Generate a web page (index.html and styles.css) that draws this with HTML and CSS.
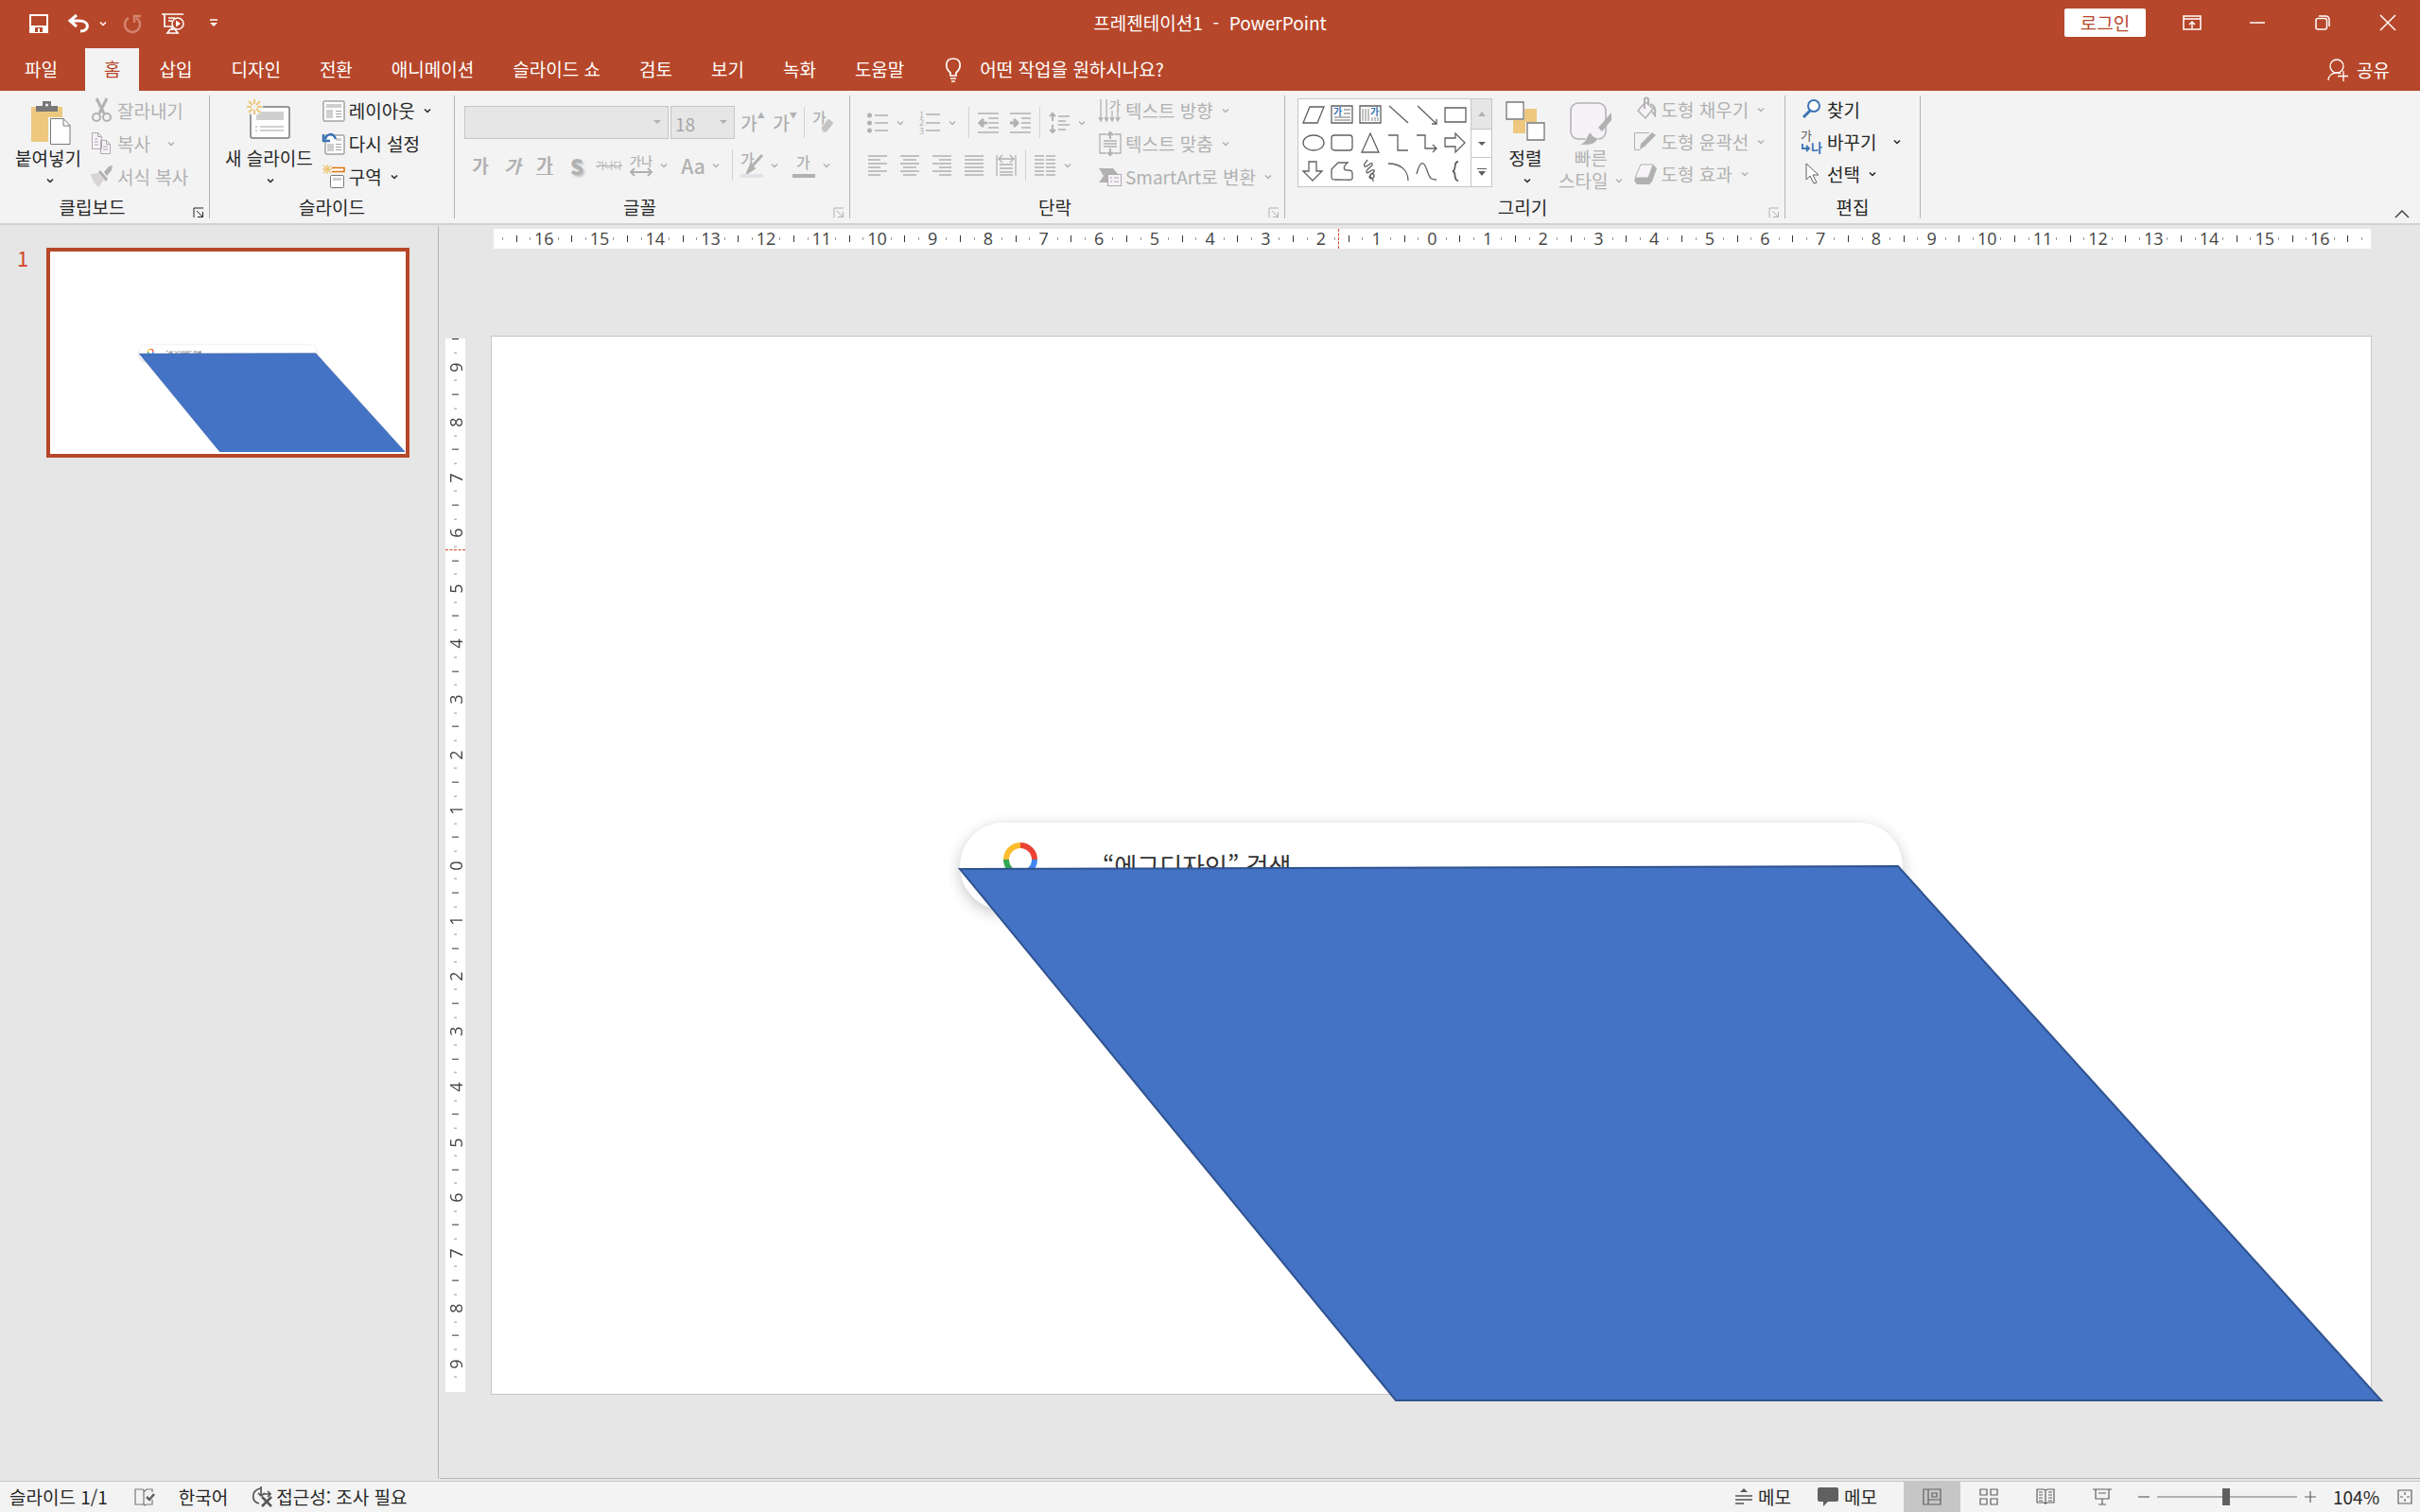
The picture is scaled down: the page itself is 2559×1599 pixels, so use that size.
FILE: index.html
```
<!DOCTYPE html>
<html lang="ko">
  <head>
    <meta charset="UTF-8" />
    <meta name="viewport" content="width=device-width, initial-scale=1.0" />
    <title>프레젠테이션1 - PowerPoint</title>
    <link rel="stylesheet" href="styles.css">
  </head>
  <body>
    <!-- shared symbols -->
    <svg class="defs" aria-hidden="true">
      <symbol id="chevron" viewBox="0 0 8 6"><path d="M1 1.5l3 3 3-3" fill="none" stroke="currentColor" stroke-width="1.5" /></symbol>
      <symbol id="launcher" viewBox="0 0 12 12"><path d="M1 11V1h10M4 4l6 6M10.500 5v5.500H5" fill="none" stroke="currentColor" /></symbol>
      <symbol id="slide-art" viewBox="0 0 1987 1118" overflow="visible">
        <filter id="soft" x="-10%" y="-60%" width="120%" height="220%"><feGaussianBlur stdDeviation="8" /></filter>
        <rect x="495" y="518" width="997" height="92" rx="46" fill="#000" opacity="0.22" filter="url(#soft)" />
        <rect x="495" y="514" width="997" height="92" rx="46" fill="#fff" />
        <g fill="none" stroke-width="6">
          <path d="M544 553a15 15 0 0 1 15-15" stroke="#fbbc2d" />
          <path d="M559 538a15 15 0 0 1 15 15" stroke="#ea4335" />
          <path d="M574 553a15 15 0 0 1-15 15" stroke="#4285f4" />
          <path d="M559 568a15 15 0 0 1-15-15" stroke="#34a853" />
        </g>
        <text x="646" y="570" class="card-text">“에그디자인” 검색</text>
        <path d="M495 563L1487 560 1998 1125H956z" fill="#4472c4" stroke="#2f528f" stroke-width="2" />
      </symbol>
    </svg>

    <header class="top">
      <div class="titlebar">
        <div class="quick">
          <button class="q" aria-label="저장"><svg width="20" height="20" viewBox="0 0 20 20"><path d="M1 1h18v18H1z" fill="none" stroke="#fff" stroke-width="2" /><path d="M1 12h18v7H1z" fill="#fff" /><path d="M6 14h8v5H6z" fill="#b7472a" /><path d="M9 15h2v4H9z" fill="#fff" /></svg></button>
          <button class="q" aria-label="실행 취소"><svg width="22" height="20" viewBox="0 0 22 20"><path d="M9 1L2 7l7 6M3 7h9c11 0 11 11 1 11" fill="none" stroke="#fff" stroke-width="3" /></svg></button>
          <button class="q-chev" aria-label="실행 취소 목록"><svg class="chev"><use href="#chevron" /></svg></button>
          <button class="q q-off" aria-label="다시 실행" disabled><svg width="20" height="20" viewBox="0 0 20 20"><path d="M6 4a8 8 0 1 0 8 0M12 9V2h7" fill="none" stroke="#d2836e" stroke-width="2.500" /></svg></button>
          <button class="q" aria-label="처음부터 시작"><svg width="24" height="22" viewBox="0 0 24 22"><path d="M0 1h23M3 1v13h8M7 5h7M7 8h4M9 17l-3 4h11l-3-4zM11 14v4" fill="none" stroke="#fff" stroke-width="1.700" /><circle cx="17" cy="11" r="6" fill="#b7472a" stroke="#fff" stroke-width="1.500" /><path d="M15 7.500v7l5-3.500z" fill="#fff" /></svg></button>
          <button class="q" aria-label="도구 모음 사용자 지정"><svg width="8" height="9" viewBox="0 0 8 9"><path d="M0 1h8" stroke="#fff" stroke-width="1.500" /><path d="M0 4h8L4 8z" fill="#fff" /></svg></button>
        </div>
        <div class="doc-title">프레젠테이션1 &nbsp;-&nbsp; PowerPoint</div>
        <div class="window-tools">
          <button class="login">로그인</button>
          <button class="win" aria-label="리본 메뉴 표시 옵션"><svg width="20" height="16" viewBox="0 0 20 16"><path d="M1 1h18v14H1zM1 4h18M10 14V7M7 10l3-3 3 3" fill="none" stroke="#fff" stroke-width="1.500" /></svg></button>
          <button class="win" aria-label="최소화"><svg width="16" height="16" viewBox="0 0 16 16"><path d="M0 8h16" stroke="#fff" stroke-width="1.500" /></svg></button>
          <button class="win" aria-label="이전 크기로"><svg width="16" height="16" viewBox="0 0 16 16"><rect x="1" y="3.500" width="11.500" height="11.500" rx="2" fill="none" stroke="#fff" stroke-width="1.500" /><path d="M4 1h7c3 0 4 1 4 4v7" fill="none" stroke="#fff" stroke-width="1.500" /></svg></button>
          <button class="win" aria-label="닫기"><svg width="16" height="16" viewBox="0 0 16 16"><path d="M0 0l16 16M16 0L0 16" stroke="#fff" stroke-width="1.500" /></svg></button>
        </div>
      </div>
      <nav class="tabs">
        <button class="tab file">파일</button>
        <button class="tab active">홈</button>
        <button class="tab">삽입</button>
        <button class="tab">디자인</button>
        <button class="tab">전환</button>
        <button class="tab">애니메이션</button>
        <button class="tab">슬라이드 쇼</button>
        <button class="tab">검토</button>
        <button class="tab">보기</button>
        <button class="tab">녹화</button>
        <button class="tab">도움말</button>
        <label class="tell-me" for="tell-me" aria-label="어떤 작업을 원하시나요?"><svg width="18" height="26" viewBox="0 0 18 26"><path d="M6 19v-3C0 11 0 1 9 1s9 10 3 15v3zM6 22h6M7 25h4" fill="none" stroke="#fff" stroke-width="1.700" /></svg></label>
        <input class="tell-input" id="tell-me" type="text" placeholder="어떤 작업을 원하시나요?" />
        <button class="share"><svg width="22" height="24" viewBox="0 0 22 24"><circle cx="10" cy="8" r="7" fill="none" stroke="#fff" stroke-width="1.300" /><path d="M1 23c0-5 4-8 9-8 2 0 3 0 4 1M17 13v11M11 18.500h11" fill="none" stroke="#fff" stroke-width="1.300" /></svg>공유</button>
      </nav>
    </header>

    <section class="ribbon">
      <div class="group clipboard">
        <div class="group-body">
          <button class="big">
            <svg class="paste" width="42" height="46" viewBox="0 0 42 46"><path d="M0 6h33v37H0z" fill="#edc87e" /><path d="M5 11V5h7V0h9v5h7v6z" fill="#787878" /><circle cx="16.500" cy="4" r="1.500" fill="#f3f3f3" /><path d="M19 18h15l8 8v20H19z" fill="#fff" stroke="#f3f3f3" stroke-width="2" /><path d="M20.500 18.500H34l7 7v20H20.500zM34 18.500V26h7" fill="#fff" stroke="#787878" /></svg>
            <span>붙여넣기</span>
            <svg class="chev"><use href="#chevron" /></svg>
          </button>
          <div class="stack">
            <button class="small" disabled><svg width="24" height="26" viewBox="0 0 24 26"><path d="M6 0l8 16M17 0L9 16" stroke="#b1b1b1" stroke-width="3" /><circle cx="6" cy="20" r="4" fill="none" stroke="#b1b1b1" stroke-width="2" /><circle cx="17" cy="20" r="4" fill="none" stroke="#b1b1b1" stroke-width="2" /></svg>잘라내기</button>
            <button class="small far" disabled><svg width="24" height="26" viewBox="0 0 24 26"><path d="M1.500 1.500h6l4 4v13h-10zM7.500 1.500v4h4M10.500 9.500h6l4 4v10h-10zM16.500 9.500v4h4" fill="#f6f2f8" stroke="#b1a8b1" /><path d="M4 8h3M4 11h4M4 14h4M13 16h5M13 19h5" stroke="#b1a8b1" /></svg>복사<svg class="chev"><use href="#chevron" /></svg></button>
            <button class="small" disabled><svg width="24" height="26" viewBox="0 0 24 26"><path d="M0 10l8-1 6 7-6 8C4 20 1 16 0 10z" fill="#d8d4d8" /><path d="M8 8l2-2 8 9-2 3zM14 8l5-6 4-1-1 5-5 6z" fill="#b1b1b1" /></svg>서식 복사</button>
          </div>
        </div>
        <div class="group-label">클립보드<button class="launch" aria-label="클립보드 옵션"><svg width="12" height="12"><use href="#launcher" /></svg></button></div>
      </div>

      <div class="group slides">
        <div class="group-body">
          <button class="big">
            <svg class="new-slide" width="48" height="46" viewBox="0 0 48 46"><rect x="5" y="8" width="41" height="33" rx="2" fill="#fff" stroke="#787878" stroke-width="1.500" /><path d="M11 13h29v9H11z" fill="#cfcfcf" /><path d="M15 29h25M15 33h25M10 29h2M10 33h2" stroke="#a0a0a0" /><circle cx="9" cy="8" r="9" fill="#f3f3f3" /><path d="M9 0v5M9 11v5M1 8h5M12 8h5M3 2l4 4M11 10l4 4M15 2l-4 4M3 14l4-4" stroke="#edc87e" stroke-width="2" /></svg>
            <span>새 슬라이드</span>
            <svg class="chev"><use href="#chevron" /></svg>
          </button>
          <div class="stack">
            <button class="small"><svg width="24" height="26" viewBox="0 0 24 26"><rect x="1" y="3" width="22" height="21" rx="1" fill="#fff" stroke="#787878" /><path d="M4 6h16v4H4zM4 12h7v9H4z" fill="#cfcfcf" /><path d="M14 13.500h6M14 16.500h6M14 19.500h6" stroke="#a0a0a0" /></svg>레이아웃<svg class="chev"><use href="#chevron" /></svg></button>
            <button class="small"><svg width="24" height="26" viewBox="0 0 24 26"><rect x="3" y="4" width="20" height="20" rx="1" fill="#fff" stroke="#787878" /><path d="M5 13h7v8H5zM14 7h6v3h-6z" fill="#cfcfcf" /><path d="M14 13.500h6M14 16.500h6M14 19.500h6" stroke="#a0a0a0" /><path d="M14 8C11 1 5 2 3 8M1 3v7h7" fill="none" stroke="#3a74b5" stroke-width="2.500" /></svg>다시 설정</button>
            <button class="small"><svg width="24" height="26" viewBox="0 0 24 26"><path d="M5 0v10M0 5h10M1 1l8 8M9 1L1 9" stroke="#edc87e" stroke-width="1.500" /><path d="M10 3.500h13v4H10" fill="#fff" stroke="#d9730d" stroke-width="1.500" /><rect x="8.500" y="11.500" width="14" height="13" rx="1" fill="#fff" stroke="#787878" /><path d="M11 14h9v3h-9z" fill="#cfcfcf" /></svg>구역<svg class="chev"><use href="#chevron" /></svg></button>
          </div>
        </div>
        <div class="group-label">슬라이드</div>
      </div>

      <div class="group font">
        <div class="group-body">
          <div class="tool-rows">
            <div class="tool-row">
              <div class="combo family"><select aria-label="글꼴" disabled><option></option></select></div>
              <div class="combo size"><select aria-label="글꼴 크기" disabled><option>18</option></select></div>
              <button class="tool grow" aria-label="글꼴 크기 크게" disabled>가<sup>▲</sup></button>
              <button class="tool grow" aria-label="글꼴 크기 작게" disabled>가<sup>▼</sup></button>
              <span class="sep"></span>
              <button class="tool" aria-label="모든 서식 지우기" disabled><svg width="24" height="26" viewBox="0 0 24 26"><text x="0" y="14" class="glyph">가</text><path d="M9 18l8-10 6 5-8 10H11z" fill="#c4c4c4" stroke="#f3f3f3" /></svg></button>
            </div>
            <div class="tool-row">
              <button class="tool bold" aria-label="굵게" disabled>가</button>
              <button class="tool bold italic" aria-label="기울임꼴" disabled>가</button>
              <button class="tool bold under" aria-label="밑줄" disabled><span>가</span></button>
              <button class="tool shadow" aria-label="텍스트 그림자" disabled>S</button>
              <button class="tool strike" aria-label="취소선" disabled>가나다</button>
              <button class="tool" aria-label="문자 간격" disabled><svg width="24" height="26" viewBox="0 0 24 26"><text x="0" y="13" class="glyph narrow">가나</text><path d="M1 20h22M5 16l-4 4 4 4M19 16l4 4-4 4" fill="none" stroke="#b1b1b1" stroke-width="2" /></svg></button><button class="drop" aria-label="문자 간격 목록" disabled><svg class="chev"><use href="#chevron" /></svg></button>
              <button class="tool aa" aria-label="대/소문자 바꾸기" disabled>Aa</button><button class="drop" aria-label="대/소문자 목록" disabled><svg class="chev"><use href="#chevron" /></svg></button>
              <span class="sep"></span>
              <button class="tool" aria-label="텍스트 강조 색" disabled><svg width="24" height="26" viewBox="0 0 24 26"><text x="0" y="13" class="glyph">가</text><path d="M23 2L13 13M11 13l3 3-6 4z" fill="#b1b1b1" stroke="#b1b1b1" stroke-width="3" /><path d="M0 22h24v4H0z" fill="#e6e0e8" /></svg></button><button class="drop" aria-label="강조 색 목록" disabled><svg class="chev"><use href="#chevron" /></svg></button>
              <button class="tool" aria-label="글꼴 색" disabled><svg width="24" height="26" viewBox="0 0 24 26"><text x="4" y="16" class="glyph">가</text><path d="M0 22h24v4H0z" fill="#b1b1b1" /></svg></button><button class="drop" aria-label="글꼴 색 목록" disabled><svg class="chev"><use href="#chevron" /></svg></button>
            </div>
          </div>
        </div>
        <div class="group-label">글꼴<button class="launch" aria-label="글꼴 옵션" disabled><svg width="12" height="12"><use href="#launcher" /></svg></button></div>
      </div>

      <div class="group paragraph">
        <div class="group-body">
          <div class="tool-rows">
            <div class="tool-row">
              <button class="tool" aria-label="글머리 기호" disabled><svg class="lines" width="22" height="22" viewBox="0 0 22 22"><path d="M8 3h14M8 11h14M8 19h14" /><g fill="#b1b1b1" stroke="none"><circle cx="2.500" cy="3" r="2.500" /><circle cx="2.500" cy="11" r="2.500" /><circle cx="2.500" cy="19" r="2.500" /></g></svg></button><button class="drop" aria-label="글머리 기호 목록" disabled><svg class="chev"><use href="#chevron" /></svg></button>
              <button class="tool" aria-label="번호 매기기" disabled><svg class="lines" width="22" height="24" viewBox="0 0 22 24"><path d="M7 3h15M7 12h15M7 20h15" /><g class="nums"><text y="7">1</text><text y="15">2</text><text y="24">3</text></g></svg></button><button class="drop" aria-label="번호 목록" disabled><svg class="chev"><use href="#chevron" /></svg></button>
              <span class="sep"></span>
              <button class="tool" aria-label="목록 수준 줄임" disabled><svg class="lines" width="22" height="22" viewBox="0 0 22 22"><path d="M0 1h22M11 6h11M11 11h11M11 16h11M0 21h22" /><path d="M10 11H2M6 7l-4 4 4 4" stroke-width="3" /></svg></button>
              <button class="tool" aria-label="목록 수준 늘림" disabled><svg class="lines" width="22" height="22" viewBox="0 0 22 22"><path d="M0 1h22M12 6h10M12 11h10M12 16h10M0 21h22" /><path d="M0 11h8M4 7l4 4-4 4" stroke-width="3" /></svg></button>
              <span class="sep"></span>
              <button class="tool" aria-label="줄 간격" disabled><svg class="lines" width="22" height="22" viewBox="0 0 22 22"><path d="M10 4h12M10 9h8M10 13h12M10 18h8" /><path d="M4 1v8M1 4l3-3 3 3M4 13v8M1 18l3 3 3-3" stroke-width="2" /></svg></button><button class="drop" aria-label="줄 간격 목록" disabled><svg class="chev"><use href="#chevron" /></svg></button>
            </div>
            <div class="tool-row">
              <button class="tool" aria-label="왼쪽 맞춤" disabled><svg class="lines" width="20" height="22" viewBox="0 0 20 22"><path d="M0 1h20M0 5h13M0 9h20M0 13h13M0 17h20M0 21h13" /></svg></button>
              <button class="tool" aria-label="가운데 맞춤" disabled><svg class="lines" width="20" height="22" viewBox="0 0 20 22"><path d="M0 1h20M3 5h14M0 9h20M3 13h14M0 17h20M3 21h14" /></svg></button>
              <button class="tool" aria-label="오른쪽 맞춤" disabled><svg class="lines" width="20" height="22" viewBox="0 0 20 22"><path d="M0 1h20M7 5h13M0 9h20M7 13h13M0 17h20M7 21h13" /></svg></button>
              <button class="tool" aria-label="양쪽 맞춤" disabled><svg class="lines" width="20" height="22" viewBox="0 0 20 22"><path d="M0 1h20M0 5h20M0 9h20M0 13h20M0 17h20M0 21h20" /></svg></button>
              <button class="tool" aria-label="균등 분할" disabled><svg class="lines" width="22" height="24" viewBox="0 0 22 24"><path d="M1 1v22M21 1v22M4 11h14M4 15h14M4 19h14M4 22h14M3 5h16M7 1L3 5l4 4M15 1l4 4-4 4" /></svg></button>
              <span class="sep"></span>
              <button class="tool" aria-label="단" disabled><svg class="lines" width="22" height="22" viewBox="0 0 22 22"><path d="M0 1h10M0 5h10M0 9h10M0 13h10M0 17h10M0 21h10M12 1h10M12 5h10M12 9h10M12 13h10M12 17h10M12 21h10" /></svg></button><button class="drop" aria-label="단 목록" disabled><svg class="chev"><use href="#chevron" /></svg></button>
            </div>
          </div>
          <div class="stack">
            <button class="small" disabled><svg class="lines" width="24" height="26" viewBox="0 0 24 26"><path d="M2 1v23M8 1v23M14 13v11M20 13v11M0 20l2 4 2-4M6 20l2 4 2-4M12 20l2 4 2-4M18 20l2 4 2-4" /><text x="11" y="12" class="glyph tiny">가</text></svg>텍스트 방향<svg class="chev"><use href="#chevron" /></svg></button>
            <button class="small" disabled><svg class="lines" width="24" height="26" viewBox="0 0 24 26"><path d="M8 3H1v20h7M16 3h7v20h-7M5 10h14M5 13h14M5 16h14" /><path d="M12 1v7M9 4l3-3 3 3M12 18v7M9 22l3 3 3-3" stroke-width="2" /></svg>텍스트 맞춤<svg class="chev"><use href="#chevron" /></svg></button>
            <button class="small" disabled><svg width="24" height="26" viewBox="0 0 24 26"><path d="M0 4h15l5 6H10v9H0l5-7z" fill="#b1b1b1" /><rect x="9.500" y="10.500" width="14" height="12" fill="#f6f2f8" stroke="#b1a8b1" /><path d="M12 14h2M16 14h5M12 18h2M16 18h5" stroke="#b1a8b1" /></svg>SmartArt로 변환<svg class="chev"><use href="#chevron" /></svg></button>
          </div>
        </div>
        <div class="group-label">단락<button class="launch" aria-label="단락 옵션" disabled><svg width="12" height="12"><use href="#launcher" /></svg></button></div>
      </div>

      <div class="group drawing">
        <div class="group-body">
          <div class="gallery">
            <div class="shapes">
              <button aria-label="평행 사변형"><svg viewBox="0 0 30 30"><path d="M4 24L11 7h15l-7 17z" /></svg></button>
              <button aria-label="텍스트 상자"><svg viewBox="0 0 30 30"><path d="M4 6h22v18H4z" /><path d="M17 10h7M17 14h7M7 18h17M7 21h17" stroke="#a0a0a0" /><text x="6" y="16">가</text></svg></button>
              <button aria-label="세로 텍스트 상자"><svg viewBox="0 0 30 30"><path d="M4 6h22v18H4z" /><path d="M7 9v13M10 9v13M13 9v13M17 18v4M20 18v4M23 18v4" stroke="#a0a0a0" /><text x="15" y="16">가</text></svg></button>
              <button aria-label="선"><svg viewBox="0 0 30 30"><path d="M5 6l20 18" /></svg></button>
              <button aria-label="화살표 선"><svg viewBox="0 0 30 30"><path d="M5 6l20 19M20 25h5v-5" /></svg></button>
              <button aria-label="직사각형"><svg viewBox="0 0 30 30"><path d="M4 8h22v15H4z" /></svg></button>
              <button aria-label="타원"><svg viewBox="0 0 30 30"><ellipse cx="15" cy="15" rx="11" ry="8" /></svg></button>
              <button aria-label="둥근 사각형"><svg viewBox="0 0 30 30"><rect x="4" y="7" width="22" height="16" rx="3" /></svg></button>
              <button aria-label="삼각형"><svg viewBox="0 0 30 30"><path d="M15 5l9 20H6z" /></svg></button>
              <button aria-label="꺾인 연결선"><svg viewBox="0 0 30 30"><path d="M4 7h10v16h11" /></svg></button>
              <button aria-label="꺾인 화살표"><svg viewBox="0 0 30 30"><path d="M4 7h9v14h12M21 17l4 4-4 4" /></svg></button>
              <button aria-label="오른쪽 화살표"><svg viewBox="0 0 30 30"><path d="M4 10h11V5l10 10-10 10v-6H4z" /></svg></button>
              <button aria-label="아래쪽 화살표"><svg viewBox="0 0 30 30"><path d="M10 5h8v10h6L14 25 4 15h6z" /></svg></button>
              <button aria-label="자유형"><svg viewBox="0 0 30 30"><path d="M4 13l7-7h10c-6 5-4 9 1 8 5 0 4 3 4 9-1 2-3 1-18 1-4 0-4-1-4-4z" /></svg></button>
              <button aria-label="자유 곡선"><svg viewBox="0 0 30 30"><path d="M12 3c-2 4-5 5-3 7s6-5 8-3-7 6-6 9 6-4 8-2-5 4-5 7 5 2 5-1-4-3-4 0 4 2 3 6" /></svg></button>
              <button aria-label="원호"><svg viewBox="0 0 30 30"><path d="M4 7c13 0 21 7 21 18" /></svg></button>
              <button aria-label="곡선"><svg viewBox="0 0 30 30"><path d="M4 18c4-16 8-13 11-4s4 10 10 10" /></svg></button>
              <button aria-label="중괄호"><svg viewBox="0 0 30 30"><path d="M18 5c-6 0-1 9-6 10 5 1 0 10 6 10" stroke-width="1.800" /></svg></button>
            </div>
            <div class="gallery-scroll">
              <button aria-label="위로" disabled><svg width="8" height="5" viewBox="0 0 8 5"><path d="M0 5h8L4 0z" fill="currentColor" /></svg></button>
              <button aria-label="아래로"><svg width="8" height="5" viewBox="0 0 8 5"><path d="M0 1h8L4 5z" fill="currentColor" /></svg></button>
              <button aria-label="자세히"><svg width="10" height="8" viewBox="0 0 10 8"><path d="M0 0h10v1H0zM1 3h8L5 8z" fill="currentColor" /></svg></button>
            </div>
          </div>
          <button class="big">
            <svg width="42" height="46" viewBox="0 0 42 46"><path d="M20 8h13v14H20zM8 20h13v14H8z" fill="#edc87e" /><path d="M1 1h18v18H1zM23 23h18v18H23z" fill="#fff" stroke="#787878" stroke-width="1.300" /></svg>
            <span>정렬</span>
            <svg class="chev"><use href="#chevron" /></svg>
          </button>
          <button class="big quick-style" disabled>
            <svg width="44" height="46" viewBox="0 0 44 46"><rect x="1" y="2" width="37" height="38" rx="8" fill="#f6f2f8" stroke="#b1b1b1" stroke-width="1.500" /><path d="M44 12L30 28l4 4 10-12z" fill="#b1b1b1" /><path d="M10 46c8 1 17 1 20-7 1-5-4-8-8-6-5 2-3 10-12 13z" fill="#b1b1b1" stroke="#f3f3f3" /><path d="M22 33c4-3 9 1 8 6-4 0-7-2-8-6z" fill="#f6f2f8" /></svg>
            <span>빠른</span>
            <span class="second">스타일<svg class="chev"><use href="#chevron" /></svg></span>
          </button>
          <div class="stack">
            <button class="small" disabled><svg width="24" height="26" viewBox="0 0 24 26"><path d="M4 14L12 5l8 7-8 10z" fill="#f6f2f8" stroke="#b1b1b1" stroke-width="1.500" /><path d="M11 12V2c0-2 4-2 4 0v6M17 7c5 1 6 5 5 12l-3-4" fill="none" stroke="#b1b1b1" stroke-width="2" /></svg>도형 채우기<svg class="chev"><use href="#chevron" /></svg></button>
            <button class="small" disabled><svg width="24" height="26" viewBox="0 0 24 26"><path d="M16 3.500H.500v18h6" fill="none" stroke="#b1b1b1" /><path d="M19 3l4 3L11 18l-5 3 1-6z" fill="#b1b1b1" /></svg>도형 윤곽선<svg class="chev"><use href="#chevron" /></svg></button>
            <button class="small" disabled><svg width="24" height="26" viewBox="0 0 24 26"><path d="M7 3h13l4 4-5 14-3 3H3l-3-4z" fill="#b1b1b1" /><path d="M7 3h13l-5 14H1z" fill="#f6f2f8" stroke="#b1b1b1" /></svg>도형 효과<svg class="chev"><use href="#chevron" /></svg></button>
          </div>
        </div>
        <div class="group-label">그리기<button class="launch" aria-label="그리기 옵션" disabled><svg width="12" height="12"><use href="#launcher" /></svg></button></div>
      </div>

      <div class="group editing">
        <div class="group-body">
          <div class="stack">
            <button class="small"><svg width="24" height="26" viewBox="0 0 24 26"><circle cx="14" cy="9" r="6" fill="#fff" stroke="#3a74b5" stroke-width="2" /><path d="M10 14l-7 7" stroke="#3a74b5" stroke-width="3" /></svg>찾기</button>
            <button class="small far"><svg width="24" height="26" viewBox="0 0 24 26"><text x="0" y="11" class="replace-a">가</text><text x="11" y="24" class="replace-b">나</text><path d="M2 15v5h7M6 17l3 3-3 3" fill="none" stroke="#3a74b5" stroke-width="1.800" /></svg>바꾸기<svg class="chev"><use href="#chevron" /></svg></button>
            <button class="small"><svg width="24" height="26" viewBox="0 0 24 26"><path d="M6 2v17l4-4 4 8 3-1-4-8h6z" fill="#fff" stroke="#606060" /></svg>선택<svg class="chev"><use href="#chevron" /></svg></button>
          </div>
        </div>
        <div class="group-label">편집</div>
      </div>
      <button class="collapse" aria-label="리본 메뉴 축소"><svg width="16" height="10" viewBox="0 0 16 10"><path d="M1 9l7-7 7 7" fill="none" stroke="#444" stroke-width="1.500" /></svg></button>
    </section>

    <main class="workspace">
      <aside class="thumbs">
        <span class="thumb-number">1</span>
        <button class="thumb" aria-label="슬라이드 1"><svg viewBox="0 0 1987 1118"><use href="#slide-art" width="1987" height="1118" /></svg></button>
      </aside>
      <section class="editor">
        <div class="ruler ruler-h" data-max="67"></div>
        <div class="stage">
          <div class="ruler ruler-v" data-max="38"></div>
          <div class="slide"><svg viewBox="0 0 1987 1118"><use href="#slide-art" width="1987" height="1118" /></svg></div>
        </div>
      </section>
    </main>

    <footer class="status">
      <span>슬라이드 1/1</span>
      <button class="s-spell" aria-label="맞춤법 검사"><svg width="22" height="20" viewBox="0 0 22 20"><path d="M10 3v15H1V2h8l2 2 2-2h6v3M10 18l1 1 2-1h6v-5" fill="none" stroke="#787878" stroke-width="1.200" /><path d="M13 10l3 3 5-6" fill="none" stroke="#606060" stroke-width="2.500" /></svg></button>
      <button class="s-lang">한국어</button>
      <button class="s-access"><svg width="22" height="22" viewBox="0 0 22 22"><path d="M8 2C-2 5-1 16 7 18M9 0v10M6 7l3 3 4-3M12 8h7M16 5l3 3-3 3" fill="none" stroke="#555" stroke-width="1.700" /><path d="M10 11l10 10M20 11L10 21" stroke="#555" stroke-width="2.500" /></svg>접근성: 조사 필요</button>
      <div class="status-right">
        <button class="s-note"><svg width="18" height="18" viewBox="0 0 18 18"><path d="M9 0l4 4H5z" fill="#555" /><path d="M0 8h18M0 12h18M0 16h9" stroke="#555" stroke-width="1.300" /></svg>메모</button>
        <button class="s-note"><svg width="22" height="20" viewBox="0 0 22 20"><path d="M2 0h18q2 0 2 2v11q0 2-2 2H11l-5 5v-5H2q-2 0-2-2V2q0-2 2-2z" fill="#606060" /></svg>메모</button>
        <button class="view on" aria-label="기본"><svg class="v" width="20" height="18" viewBox="0 0 20 18"><path d="M1 1h18v16H1zM6 1v16M6 12h13M10 5h5v4h-5z" /></svg></button>
        <button class="view" aria-label="여러 슬라이드"><svg class="v" width="20" height="18" viewBox="0 0 20 18"><path d="M1 1h7v6H1zM12 1h7v6h-7zM1 11h7v6H1zM12 11h7v6h-7z" /></svg></button>
        <button class="view" aria-label="읽기용 보기"><svg class="v" width="20" height="18" viewBox="0 0 20 18"><path d="M10 2v15M1 1h7l2 1 2-1h7v14h-7l-2 1-2-1H1zM3 4h4M3 7h4M3 10h4M3 13h4M13 4h4M13 7h4M13 10h4M13 13h4" /></svg></button>
        <button class="view" aria-label="슬라이드 쇼"><svg class="v" width="20" height="18" viewBox="0 0 20 18"><path d="M0 1h20M3 1v10h14V1M6 5h8M10 11v6M6 17h8" /></svg></button>
        <button class="zoom-btn" aria-label="축소"><svg class="v" width="12" height="12" viewBox="0 0 12 12"><path d="M0 6h12" /></svg></button>
        <input class="zoom" type="range" min="10" max="200" value="104" aria-label="확대/축소" />
        <button class="zoom-btn" aria-label="확대"><svg class="v" width="12" height="12" viewBox="0 0 12 12"><path d="M0 6h12M6 0v12" /></svg></button>
        <button class="percent">104%</button>
        <button class="fit" aria-label="창에 맞춤"><svg class="v" width="16" height="16" viewBox="0 0 16 16"><path d="M1 1h14v14H1zM8 3v3M8 10v3M3 8h3M10 8h3" /></svg></button>
      </div>
    </footer>

    <script>
      // one mark per quarter centimetre, counted out from the middle
      document.querySelectorAll(".ruler").forEach((ruler) => {
        const max = Number(ruler.dataset.max);
        for (let i = -max; i <= max; i++) {
          const mark = document.createElement("span");
          if (i % 4 === 0) {
            mark.className = "num";
            mark.textContent = Math.abs(i / 4);
          } else {
            mark.className = i % 2 === 0 ? "half" : "quarter";
          }
          ruler.appendChild(mark);
        }
        // pointer position
        const pointer = document.createElement("i");
        pointer.className = "pointer";
        ruler.appendChild(pointer);
      });
    </script>
  </body>
</html>
```
FILE: styles.css
```
* {
  box-sizing: border-box;
}

body {
  margin: 0;
  height: 100vh;
  display: flex;
  flex-direction: column;
  overflow: hidden;
  background-color: #e6e6e6;
  color: #262626;
  font-family: "Noto Sans CJK KR", "Noto Sans", sans-serif;
  font-size: 19px;
  line-height: 24px;
}

button,
input,
select {
  margin: 0;
  padding: 0;
  border: none;
  border-radius: 0;
  background: none;
  color: inherit;
  font: inherit;
  white-space: nowrap;
}

button {
  display: flex;
  align-items: center;
  justify-content: center;
}

svg {
  flex-shrink: 0;
  overflow: visible;
}

button:disabled {
  color: #b1b1b1;
}

.defs {
  position: absolute;
  width: 0;
  height: 0;
}

.chev {
  width: 8px;
  height: 6px;
}

.card-text {
  font-size: 26px;
  fill: #333;
}

/* title bar and tabs */
.top {
  background-color: #b7472a;
  color: #fff;
}

.titlebar {
  display: grid;
  grid-template-columns: 1fr auto 1fr;
  align-items: center;
  height: 51px;
  padding-bottom: 4px;
}

.quick {
  display: flex;
  align-items: center;
  gap: 21px;
  padding: 2px 0 0 31px;
}

.q-chev {
  margin-left: -10px;
}

.q-off {
  margin-left: -4px;
}

.q:last-child {
  margin-left: 6px;
}

.window-tools {
  display: flex;
  align-items: center;
  justify-content: flex-end;
}

.login {
  width: 86px;
  height: 30px;
  margin-right: 14px;
  border-radius: 2px;
  background-color: #fff;
  color: #b7472a;
}

.win {
  width: 69px;
  height: 40px;
}

.tabs {
  display: flex;
  gap: 1px;
  height: 45px;
  padding-left: 6px;
}

.tab {
  padding: 0 20px 2px;
}

.tab.file {
  margin-right: 8px;
}

.tab.active {
  background-color: #f3f3f3;
  color: #b7472a;
}

.tell-me {
  display: flex;
  align-items: center;
  padding: 0 18px 0 22px;
}

.tell-input {
  width: 240px;
  padding-bottom: 2px;
}

.tell-input::placeholder {
  color: #fff;
  opacity: 1;
}

.share {
  margin-left: auto;
  padding-right: 32px;
  gap: 9px;
}

/* ribbon */
.ribbon {
  display: flex;
  flex-shrink: 0;
  padding: 5px 0;
  background-color: #f3f3f3;
  border-bottom: 2px solid #d2d2d2;
}

.group {
  position: relative;
  display: flex;
  flex-direction: column;
  height: 130px;
  border-right: 1px solid #b4b4b4;
}

.group-body {
  display: flex;
  height: 108px;
}

.group-label {
  padding: 2px 26px 0 0;
  text-align: center;
}

.launch {
  position: absolute;
  right: 5px;
  bottom: 0;
}

.clipboard {
  width: 222px;
}

.clipboard .group-body {
  padding-left: 16px;
  gap: 10px;
}

.slides {
  width: 259px;
}

.slides .group-body {
  padding-left: 16px;
  gap: 10px;
}

.slides .group-label,
.editing .group-label {
  padding-right: 0;
}

.font {
  width: 418px;
}

.font .group-body {
  padding-left: 10px;
}

.paragraph {
  width: 460px;
}

.paragraph .group-body {
  padding-left: 12px;
}

.paragraph .stack {
  margin-left: 4px;
}

.drawing {
  width: 529px;
}

.drawing .group-body {
  padding-left: 13px;
  gap: 14px;
}

.drawing .quick-style {
  margin-right: -2px;
}

.editing {
  width: 143px;
}

.editing .group-body {
  padding-left: 16px;
}

.big {
  flex-direction: column;
  justify-content: flex-start;
  padding-top: 6px;
}

.big span {
  padding-top: 2px;
}

.big > .chev {
  margin: 9px 0 0 4px;
}

.paste {
  margin-left: 6px;
}

.new-slide {
  margin-top: -2px;
  margin-bottom: 2px;
}

.big .second {
  display: flex;
  align-items: center;
  gap: 8px;
  padding: 0;
}

.stack {
  display: flex;
  flex-direction: column;
  margin-top: -2px;
}

.small {
  height: 35px;
  gap: 4px;
  justify-content: flex-start;
}

.drawing .small,
.editing .small {
  height: 34px;
}

.small .chev {
  margin-left: 5px;
}

.small.far .chev {
  margin-left: 14px;
}

.tool-rows {
  display: flex;
  flex-direction: column;
  gap: 10px;
  padding-top: 11px;
}

.tool-row {
  display: flex;
  align-items: center;
  height: 35px;
}

.combo {
  position: relative;
  height: 35px;
  margin-right: 2px;
}

.combo select {
  width: 100%;
  height: 100%;
  padding: 2px 4px 0;
  appearance: none;
  border: 1px solid #c6c6c6;
  background-color: #e6e6e6;
  color: #a6a6a6;
  opacity: 1;
}

.combo::after {
  content: "";
  position: absolute;
  right: 8px;
  top: 15px;
  border: 4px solid transparent;
  border-top-color: #b1b1b1;
}

.family {
  width: 216px;
}

.size {
  width: 68px;
}

.tool {
  width: 34px;
  height: 34px;
}

.drop {
  width: 14px;
  height: 34px;
  margin-right: 7px;
}

.sep {
  width: 1px;
  height: 33px;
  margin: 0 3px;
  background-color: #d2d2d2;
}

.grow {
  font-weight: 500;
}

.grow sup {
  font-size: 8px;
  line-height: 8px;
  margin-top: -16px;
}

.bold {
  font-weight: 700;
}

.italic {
  font-style: italic;
}

.under span {
  line-height: 20px;
  border-bottom: 1px solid #b1b1b1;
}

.shadow {
  font-size: 22px;
  font-weight: 900;
  text-shadow: 2px 2px 2px #c6c6c6;
}

.strike {
  font-size: 10px;
  text-decoration: line-through;
}

.aa {
  font-size: 21px;
  font-weight: 500;
}

.glyph {
  font-size: 16px;
  font-weight: 500;
  fill: #b1b1b1;
  stroke: none;
}

.glyph.narrow,
.glyph.tiny {
  font-size: 13px;
}

.lines {
  fill: none;
  stroke: #b1b1b1;
  stroke-width: 1.3;
}

.nums {
  fill: #b1b1b1;
  stroke: none;
  font-size: 9px;
}

.gallery {
  display: flex;
  height: 94px;
  margin-top: 3px;
  border: 1px solid #c6c6c6;
  background-color: #fff;
}

.shapes {
  display: grid;
  grid-template-columns: repeat(6, 30px);
  grid-template-rows: repeat(3, 30px);
  padding: 1px;
}

.shapes svg {
  width: 30px;
  height: 30px;
  fill: none;
  stroke: #606060;
  stroke-width: 1.3;
}

.shapes text {
  fill: #3a74b5;
  stroke: none;
  font-size: 10px;
  font-weight: 700;
}

.gallery-scroll {
  display: grid;
  grid-template-rows: 1fr 1fr 1fr;
  width: 22px;
  border-left: 1px solid #c6c6c6;
  color: #606060;
}

.gallery-scroll button + button {
  border-top: 1px solid #c6c6c6;
}

.gallery-scroll button:disabled {
  background-color: #e6e6e6;
}

.replace-a,
.replace-b {
  font-size: 13px;
  fill: #606060;
}

.replace-b {
  font-weight: 700;
  fill: #3a74b5;
}

.collapse {
  margin-left: auto;
  align-self: flex-end;
  padding: 0 11px 0 0;
}

/* workspace */
.workspace {
  flex: 1;
  min-height: 0;
  display: grid;
  grid-template-columns: 464px 1fr;
  padding: 1px 0 2px;
}

.thumbs {
  display: flex;
  align-items: flex-start;
  padding: 23px 30px 0 18px;
  border-right: 1px solid #b4b4b4;
}

.thumb-number {
  width: 31px;
  line-height: 20px;
  color: #d24726;
  font-size: 22px;
}

.thumb {
  flex: 1;
  border: 4px solid #b7472a;
  padding: 2px 1px;
  background-color: #fff;
}

.thumb svg {
  width: 100%;
  display: block;
  overflow: hidden;
}

.editor {
  display: flex;
  flex-direction: column;
  min-width: 0;
  padding-top: 3px;
  margin-left: 1px;
  border-bottom: 1px solid #b4b4b4;
}

.stage {
  flex: 1;
  display: flex;
  align-items: center;
  gap: 27px;
  padding: 4px 51px 0 6px;
}

.slide {
  flex: 1;
  aspect-ratio: 1987 / 1118;
  border: 1px solid #c6c6c6;
  background-color: #fff;
}

.slide svg {
  display: block;
  width: 100%;
  overflow: visible;
}

.ruler {
  position: relative;
  display: flex;
  background-color: #fff;
  color: #444;
  font-family: "Open Sans", "Noto Sans", sans-serif;
  font-size: 18px;
}

.ruler span {
  flex: 1;
  display: flex;
  align-items: center;
  justify-content: center;
}

.ruler-h {
  height: 21px;
  margin: 0 52px 0 57px;
  padding: 0 2px;
}

.ruler-h span {
  width: 0;
}

.ruler-h .num {
  padding-bottom: 1px;
}

.ruler-h .half::before {
  content: "";
  width: 1px;
  height: 7px;
  background-color: #333;
}

.ruler-h .quarter::before {
  content: "";
  width: 1px;
  height: 3px;
  background-color: #999;
}

.ruler-h .pointer {
  position: absolute;
  left: 45%;
  top: 0;
  bottom: 0;
  border-left: 1px dashed #d24726;
}

.ruler-v {
  align-self: stretch;
  flex-direction: column;
  width: 21px;
  margin: 91px 0;
}

.ruler-v span {
  height: 0;
  writing-mode: vertical-rl;
  transform: rotate(180deg);
}

/* the slide edge cuts the outermost marks in half */
.ruler-v span:first-child,
.ruler-v span:last-of-type {
  flex: 0 0 8px;
  justify-content: flex-end;
}

.ruler-v span:last-of-type {
  visibility: hidden;
}

.ruler-v .half::before {
  content: "";
  width: 7px;
  height: 1px;
  background-color: #333;
}

.ruler-v .quarter::before {
  content: "";
  width: 3px;
  height: 1px;
  background-color: #999;
}

.ruler-v .pointer {
  position: absolute;
  top: 20%;
  left: 0;
  right: 0;
  border-top: 1px dashed #d24726;
}

/* status bar */
.status {
  display: flex;
  align-items: center;
  flex-shrink: 0;
  height: 33px;
  padding-left: 10px;
  border-top: 1px solid #c6c6c6;
  background-color: #f3f3f3;
}

.s-spell {
  margin-left: 28px;
}

.s-lang {
  margin-left: 25px;
}

.s-access {
  margin-left: 26px;
  gap: 3px;
}

.status-right {
  display: flex;
  align-items: center;
  align-self: stretch;
  margin-left: auto;
  padding-right: 8px;
}

.s-note {
  gap: 6px;
  margin-right: 28px;
}

.view {
  width: 60px;
  align-self: stretch;
}

.view.on {
  background-color: #c6c6c6;
}

.v {
  fill: none;
  stroke: #606060;
  stroke-width: 1.2;
}

.zoom-btn {
  margin-left: 8px;
}

.zoom {
  width: 148px;
  height: 18px;
  margin-left: 8px;
  appearance: none;
  background: linear-gradient(#b1b1b1, #b1b1b1) center / 100% 2px no-repeat;
}

.zoom::-webkit-slider-thumb {
  appearance: none;
  width: 8px;
  height: 18px;
  background-color: #606060;
}

.percent {
  width: 48px;
  margin-left: 18px;
  justify-content: flex-start;
}

.fit {
  margin-left: 20px;
}
```
